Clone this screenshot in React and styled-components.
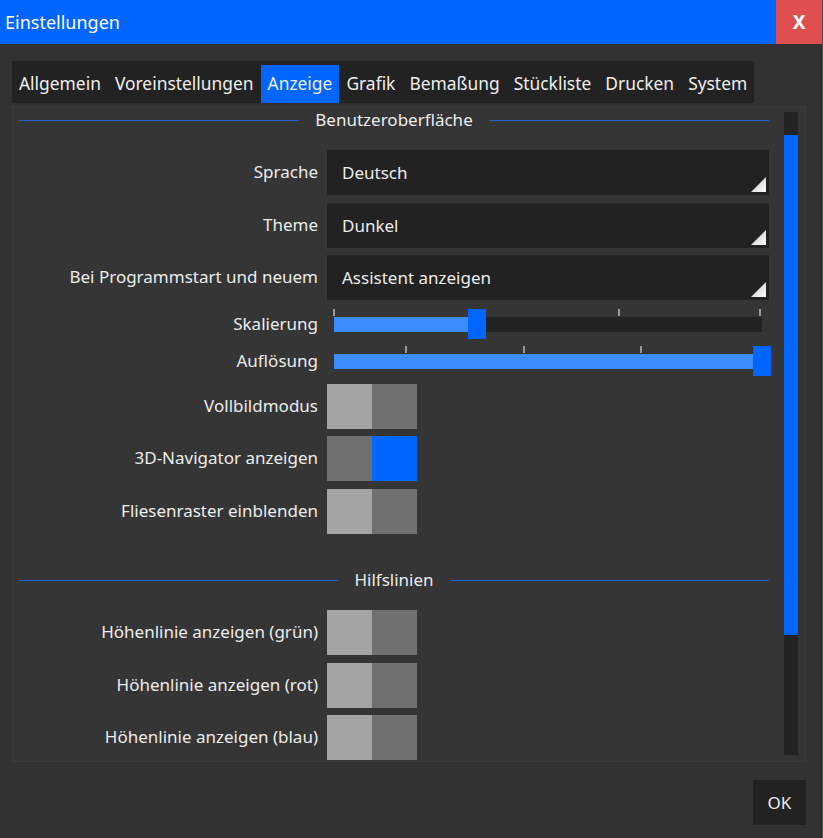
import React from 'react';
import styled, { createGlobalStyle } from 'styled-components';

const Global = createGlobalStyle`
  html, body {
    margin: 0;
    padding: 0;
    background: #323232;
  }
  body {
    font-family: 'Noto Sans', 'Open Sans', sans-serif;
    color: #ececec;
  }
`;

const Window = styled.div`
  width: 822px;
  height: 838px;
  background: #323232;
  border-right: 1px solid #4c4c4c;
  display: flex;
  flex-direction: column;
`;

const TitleBar = styled.div`
  height: 44px;
  background: #0066ff;
  display: flex;
  align-items: center;
  justify-content: space-between;
  .title {
    padding-left: 5px;
    font-size: 18px;
    color: #fff;
  }
`;

const Close = styled.div`
  width: 46px;
  height: 44px;
  background: #df4f4f;
  color: #fff;
  font-weight: 700;
  font-size: 19px;
  display: flex;
  align-items: center;
  justify-content: center;
`;

const Body = styled.div`
  flex: 1;
  padding: 17px 16px 0 12px;
  display: flex;
  flex-direction: column;
`;

const Tabs = styled.div`
  align-self: flex-start;
  display: flex;
  align-items: flex-end;
  height: 42px;
  box-sizing: border-box;
  padding-top: 4px;
  background: #222222;
`;

const Tab = styled.div`
  height: 38px;
  padding: 0 7px;
  display: flex;
  align-items: center;
  padding-bottom: 2px;
  box-sizing: border-box;
  font-size: 17.4px;
  color: #eee;
  background: ${p => (p.active ? '#0066ff' : 'transparent')};
`;

const Panel = styled.div`
  margin-top: 3px;
  height: 656px;
  box-sizing: border-box;
  background: #353535;
  border: 1px solid #3b3b3b;
  display: flex;
  overflow: hidden;
`;

const Content = styled.div`
  flex: 1;
  padding: 1px 15px 0 6px;
  display: flex;
  flex-direction: column;
  overflow: hidden;
`;

const Scrollbar = styled.div`
  width: 14px;
  margin: 5px 7px 6px 0;
  background: #222222;
  display: flex;
  flex-direction: column;
  .thumb {
    margin-top: 23px;
    height: 500px;
    background: #0066ff;
  }
`;

const SectionHead = styled.div`
  height: 24px;
  flex-shrink: 0;
  display: flex;
  align-items: center;
  margin-top: ${p => p.mt || 0}px;
  font-size: 17px;
  &::before,
  &::after {
    content: '';
    flex: 1;
    height: 1px;
    background: #1f62c9;
  }
  span {
    padding: 0 16px;
    margin-top: -2px;
  }
`;

const Row = styled.div`
  display: flex;
  align-items: center;
  flex-shrink: 0;
  gap: 9px;
  height: ${p => p.h || 45}px;
  margin-top: ${p => p.mt || 0}px;
`;

const Label = styled.div`
  width: 299px;
  text-align: right;
  font-size: 17px;
  white-space: nowrap;
  margin-top: -2px;
`;

const Select = styled.div`
  flex: 1;
  height: 45px;
  background: #222222;
  position: relative;
  display: flex;
  align-items: center;
  padding-left: 15px;
  font-size: 17px;
  &::after {
    content: '';
    position: absolute;
    right: 3px;
    bottom: 3px;
    width: 15px;
    height: 15px;
    background: linear-gradient(135deg, #bdbdbd, #ffffff);
    clip-path: polygon(100% 0, 100% 100%, 0 100%);
  }
`;

const Slider = styled.div`
  flex: 1;
  height: 30px;
  position: relative;
  display: flex;
  align-items: center;
  padding: 0 7px;
`;

const Track = styled.div`
  position: relative;
  flex: 1;
  height: 15px;
  background: #222222;
`;

const Fill = styled.div`
  height: 100%;
  background: #3a8cff;
`;

const Tick = styled.div`
  position: absolute;
  top: -8px;
  width: 2px;
  height: 7px;
  margin-left: -1px;
  background: #9a9a9a;
`;

const Handle = styled.div`
  position: absolute;
  top: -8px;
  width: 18px;
  height: 30px;
  margin-left: -9px;
  background: #0066ff;
`;

const Toggle = styled.div`
  display: flex;
  width: 90px;
  height: 45px;
  span {
    flex: 1;
  }
  span:first-child {
    background: ${p => (p.on ? '#707070' : '#a4a4a4')};
  }
  span:last-child {
    background: ${p => (p.on ? '#0066ff' : '#707070')};
  }
`;

const Footer = styled.div`
  display: flex;
  justify-content: flex-end;
  padding-top: 18px;
`;

const OkButton = styled.div`
  width: 53px;
  height: 45px;
  background: #222222;
  display: flex;
  align-items: center;
  justify-content: center;
  font-size: 17px;
`;

const tabs = ['Allgemein', 'Voreinstellungen', 'Anzeige', 'Grafik', 'Bemaßung', 'Stückliste', 'Drucken', 'System'];

const SliderControl = ({ value, ticks }) => (
  <Slider>
    <Track>
      <Fill style={{ width: `${value * 100}%` }} />
      {ticks.map(t => (
        <Tick key={t} style={{ left: `${t * 100}%` }} />
      ))}
      <Handle style={{ left: `${value * 100}%` }} />
    </Track>
  </Slider>
);

const ToggleRow = ({ label, on, mt }) => (
  <Row mt={mt}>
    <Label>{label}</Label>
    <Toggle on={on}>
      <span />
      <span />
    </Toggle>
  </Row>
);

const App = () => {
  return (
    <>
      <Global />
      <Window>
        <TitleBar>
          <span className="title">Einstellungen</span>
          <Close>X</Close>
        </TitleBar>
        <Body>
          <Tabs>
            {tabs.map(t => (
              <Tab key={t} active={t === 'Anzeige'}>
                {t}
              </Tab>
            ))}
          </Tabs>
          <Panel>
            <Content>
              <SectionHead>
                <span>Benutzeroberfläche</span>
              </SectionHead>
              <Row mt={18}>
                <Label>Sprache</Label>
                <Select>Deutsch</Select>
              </Row>
              <Row mt={8}>
                <Label>Theme</Label>
                <Select>Dunkel</Select>
              </Row>
              <Row mt={7}>
                <Label>Bei Programmstart und neuem</Label>
                <Select>Assistent anzeigen</Select>
              </Row>
              <Row h={30} mt={9}>
                <Label>Skalierung</Label>
                <SliderControl value={0.335} ticks={[0, 0.333, 0.666, 0.996]} />
              </Row>
              <Row h={30} mt={7}>
                <Label>Auflösung</Label>
                <SliderControl value={1} ticks={[0.168, 0.443, 0.717]} />
              </Row>
              <ToggleRow label="Vollbildmodus" mt={8} />
              <ToggleRow label="3D-Navigator anzeigen" on mt={7} />
              <ToggleRow label="Fliesenraster einblenden" mt={8} />
              <SectionHead mt={34}>
                <span>Hilfslinien</span>
              </SectionHead>
              <ToggleRow label="Höhenlinie anzeigen (grün)" mt={18} />
              <ToggleRow label="Höhenlinie anzeigen (rot)" mt={8} />
              <ToggleRow label="Höhenlinie anzeigen (blau)" mt={7} />
            </Content>
            <Scrollbar>
              <div className="thumb" />
            </Scrollbar>
          </Panel>
          <Footer>
            <OkButton>OK</OkButton>
          </Footer>
        </Body>
      </Window>
    </>
  );
};

export default App;
